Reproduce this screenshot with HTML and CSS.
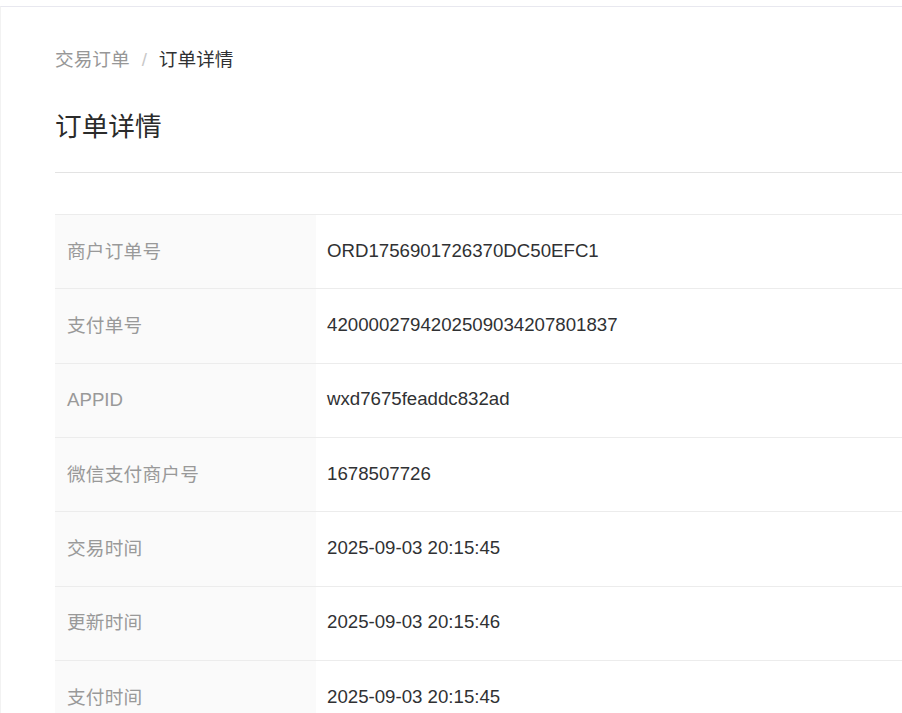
FILE: index.html
```html
<!DOCTYPE html>
<html lang="zh-CN">
<head>
<meta charset="utf-8">
<title>订单详情</title>
<link rel="stylesheet" href="styles.css">
</head>
<body>
<div class="frame">
  <div class="page">
    <nav class="crumbs">
      <span class="crumb-link">交易订单</span>
      <span class="crumb-sep">/</span>
      <span class="crumb-current">订单详情</span>
    </nav>
    <h1 class="title">订单详情</h1>
    <div class="divider"></div>
    <table class="detail">
      <tbody>
        <tr><th>商户订单号</th><td>ORD1756901726370DC50EFC1</td></tr>
        <tr><th>支付单号</th><td>4200002794202509034207801837</td></tr>
        <tr><th class="latin">APPID</th><td>wxd7675feaddc832ad</td></tr>
        <tr><th>微信支付商户号</th><td>1678507726</td></tr>
        <tr><th>交易时间</th><td>2025-09-03 20:15:45</td></tr>
        <tr><th>更新时间</th><td>2025-09-03 20:15:46</td></tr>
        <tr><th>支付时间</th><td>2025-09-03 20:15:45</td></tr>
      </tbody>
    </table>
  </div>
</div>
</body>
</html>
```
FILE: styles.css
```css
html, body {
  margin: 0;
  padding: 0;
  background: #ffffff;
  overflow: hidden;
}
body {
  font-family: "Liberation Sans", Arial, "Noto Sans CJK SC", sans-serif;
  color: #303133;
}
.frame {
  margin-top: 6px;
  border-top: 1px solid #e8e8ef;
  border-left: 1px solid #f2f2f2;
  height: 706px;
  overflow: hidden;
}
.page {
  width: 1200px;
  padding: 39px 0 0 54px;
}
.crumbs {
  font-size: 18.67px;
  line-height: 28px;
  display: flex;
  align-items: center;
}
.crumb-link {
  color: #979797;
}
.crumb-sep {
  color: #c8c8c8;
  margin: 0 12px;
}
.crumb-current {
  color: #303133;
}
.title {
  margin: 35px 0 0 0;
  font-size: 26.67px;
  line-height: 36px;
  font-weight: normal;
  color: #2b2b2b;
}
.divider {
  margin-top: 27px;
  border-top: 1px solid #e3e3e3;
}
.detail {
  margin-top: 41px;
  width: 100%;
  border-collapse: collapse;
  font-size: 18.67px;
}
.detail tr {
  border-top: 1px solid #ececec;
  height: 74.33px;
}
.detail th {
  width: 261px;
  box-sizing: border-box;
  padding: 0 12px 5px 12px;
  text-align: left;
  font-weight: normal;
  letter-spacing: 0.2px;
  color: #999999;
  background: #fafafa;
}
.detail th.latin {
  padding-bottom: 1px;
  letter-spacing: 0;
}
.detail td {
  padding: 0 11px 2px 11px;
  color: #303133;
}
```
